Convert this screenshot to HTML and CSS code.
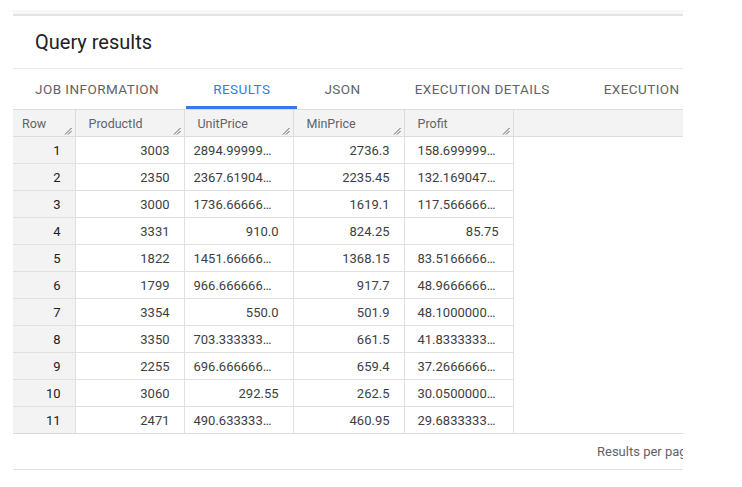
FILE: index.html
```html
<!DOCTYPE html>
<html>
<head>
<meta charset="utf-8">
<link rel="stylesheet" href="styles.css">
</head>
<body>
<div class="panel">
  <div class="topbar"></div>
  <div class="title">Query results</div>
  <div class="tabs">
    <div class="tab first">JOB INFORMATION</div>
    <div class="tab active">RESULTS</div>
    <div class="tab">JSON</div>
    <div class="tab">EXECUTION DETAILS</div>
    <div class="tab">EXECUTION GRAPH</div>
  </div>
  <table class="grid">
    <colgroup>
      <col class="c-row"><col class="c-pid"><col class="c-unit"><col class="c-min"><col class="c-profit"><col>
    </colgroup>
    <thead>
      <tr>
        <th class="row-h">Row<svg class="grip" viewBox="0 0 8 8"><path d="M1 7.5L7.5 1M4 7.5L7.5 4"/></svg></th>
        <th>ProductId<svg class="grip" viewBox="0 0 8 8"><path d="M1 7.5L7.5 1M4 7.5L7.5 4"/></svg></th>
        <th>UnitPrice<svg class="grip" viewBox="0 0 8 8"><path d="M1 7.5L7.5 1M4 7.5L7.5 4"/></svg></th>
        <th>MinPrice<svg class="grip" viewBox="0 0 8 8"><path d="M1 7.5L7.5 1M4 7.5L7.5 4"/></svg></th>
        <th>Profit<svg class="grip" viewBox="0 0 8 8"><path d="M1 7.5L7.5 1M4 7.5L7.5 4"/></svg></th>
        <th class="fill"></th>
      </tr>
    </thead>
    <tbody>
      <tr><td class="num">1</td><td>3003</td><td class="tr u">2894.99999…</td><td>2736.3</td><td class="tr p">158.699999…</td><td class="fill"></td></tr>
      <tr><td class="num">2</td><td>2350</td><td class="tr u">2367.61904…</td><td>2235.45</td><td class="tr p">132.169047…</td><td class="fill"></td></tr>
      <tr><td class="num">3</td><td>3000</td><td class="tr u">1736.66666…</td><td>1619.1</td><td class="tr p">117.566666…</td><td class="fill"></td></tr>
      <tr><td class="num">4</td><td>3331</td><td>910.0</td><td>824.25</td><td>85.75</td><td class="fill"></td></tr>
      <tr><td class="num">5</td><td>1822</td><td class="tr u">1451.66666…</td><td>1368.15</td><td class="tr p">83.5166666…</td><td class="fill"></td></tr>
      <tr><td class="num">6</td><td>1799</td><td class="tr u">966.666666…</td><td>917.7</td><td class="tr p">48.9666666…</td><td class="fill"></td></tr>
      <tr><td class="num">7</td><td>3354</td><td>550.0</td><td>501.9</td><td class="tr p">48.1000000…</td><td class="fill"></td></tr>
      <tr><td class="num">8</td><td>3350</td><td class="tr u">703.333333…</td><td>661.5</td><td class="tr p">41.8333333…</td><td class="fill"></td></tr>
      <tr><td class="num">9</td><td>2255</td><td class="tr u">696.666666…</td><td>659.4</td><td class="tr p">37.2666666…</td><td class="fill"></td></tr>
      <tr><td class="num">10</td><td>3060</td><td>292.55</td><td>262.5</td><td class="tr p">30.0500000…</td><td class="fill"></td></tr>
      <tr><td class="num">11</td><td>2471</td><td class="tr u">490.633333…</td><td>460.95</td><td class="tr p">29.6833333…</td><td class="fill"></td></tr>
    </tbody>
  </table>
  <div class="footer">
    <span class="pager">Results per page: 50 &nbsp; 1 – 11 of 11</span>
  </div>
</div>
</body>
</html>
```
FILE: styles.css
```css
html, body {
  margin: 0;
  padding: 0;
  background: #ffffff;
}
body {
  font-family: Roboto, "Liberation Sans", Arial, sans-serif;
  color: #202124;
}
.panel {
  width: 670px;
  margin: 10px 0 0 13px;
  overflow: hidden;
}
.topbar {
  height: 4px;
  background: #f7f7f7;
  border-bottom: 2px solid #e3e3e3;
}
.title {
  height: 52px;
  display: flex;
  align-items: center;
  padding-left: 22px;
  font-size: 20px;
  color: #202124;
  border-bottom: 1px solid #e8e8e8;
}
.tabs {
  display: flex;
  height: 40px;
  white-space: nowrap;
}
.tab {
  display: flex;
  align-items: center;
  padding: 0 27px;
  font-size: 13.5px;
  letter-spacing: 0.45px;
  color: #5f6368;
  flex: none;
  box-sizing: border-box;
}
.tab.first {
  padding-left: 22px;
}
.tab.active {
  color: #3b78e7;
  border-bottom: 3px solid #3b78e7;
  padding-top: 3px;
}
.grid {
  width: 670px;
  border-collapse: collapse;
  table-layout: fixed;
  font-size: 13px;
}
.c-row { width: 62px; }
.c-pid { width: 109px; }
.c-unit { width: 109px; }
.c-min { width: 111px; }
.c-profit { width: 109px; }
.grid th {
  position: relative;
  height: 26px;
  padding: 0 0 0 13px;
  text-align: left;
  font-weight: 400;
  font-size: 12.5px;
  color: #5f6368;
  background: #f3f3f3;
  border-top: 1px solid #dadce0;
  border-bottom: 1px solid #dadce0;
  border-right: 1px solid #dadce0;
}
.grid th.row-h {
  padding-left: 9px;
}
.grid th.fill {
  border-right: none;
}
.grip {
  position: absolute;
  right: 3px;
  bottom: 1px;
  width: 8px;
  height: 8px;
  fill: none;
  stroke: #5f6368;
  stroke-width: 1;
}
.grid td {
  height: 26px;
  padding: 0 14px 0 9px;
  text-align: right;
  color: #3c4043;
  border-bottom: 1px solid #e0e0e0;
  border-right: 1px solid #e0e0e0;
  white-space: nowrap;
  overflow: hidden;
}
.grid td.num {
  background: #f3f3f3;
  color: #202124;
}
.grid td.tr {
  text-align: left;
}
.grid td.tr.p {
  padding-left: 13px;
}
.grid td.fill {
  border: none;
}
.grid tbody tr:last-child td {
  border-bottom: 1px solid #dadce0;
}
.grid tbody tr:last-child td.fill {
  border-bottom: 1px solid #dadce0;
}
.footer {
  height: 35px;
  display: flex;
  align-items: center;
  padding-left: 584px;
  border-bottom: 1px solid #e0e0e0;
  white-space: nowrap;
  font-size: 13px;
  color: #5f6368;
}
.pager {
  flex: none;
}
```
